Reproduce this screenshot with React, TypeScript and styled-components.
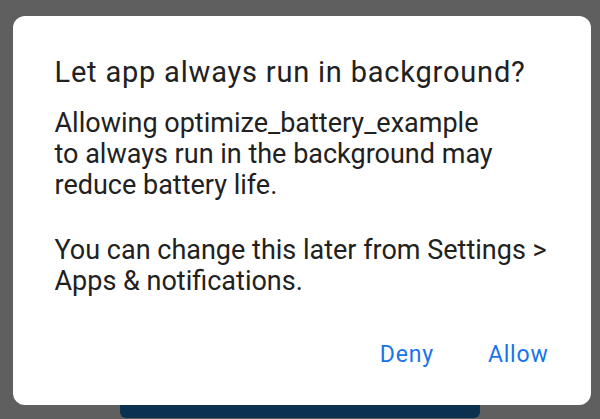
import styled, { createGlobalStyle } from "styled-components";

const GlobalStyle = createGlobalStyle`
  html, body {
    margin: 0;
    padding: 0;
    background: #5f5f5f;
    overflow: hidden;
  }
  body {
    font-family: Roboto, "Noto Sans", "Liberation Sans", sans-serif;
  }
`;

const Screen = styled.div`
  width: 600px;
  height: 419px;
  display: flex;
  flex-direction: column;
  align-items: center;
  padding-top: 16px;
  box-sizing: border-box;
`;

const Dialog = styled.div`
  width: 578px;
  height: 389px;
  margin-left: 3px;
  background: #ffffff;
  border-radius: 12px;
  box-sizing: border-box;
  padding: 40px 42px 0 42px;
  display: flex;
  flex-direction: column;
`;

const Title = styled.h2`
  margin: 0;
  font-size: 29px;
  line-height: 32px;
  font-weight: 400;
  letter-spacing: 0.8px;
  color: #212121;
  white-space: nowrap;
`;

const Message = styled.p<{ $gap: number }>`
  margin: 0;
  font-size: 27px;
  line-height: 31px;
  color: #212121;
  white-space: nowrap;
  padding-top: ${(props) => props.$gap}px;
`;

const Actions = styled.div`
  display: flex;
  justify-content: flex-end;
  gap: 54px;
  margin-top: auto;
  margin-bottom: 36px;
`;

const ActionButton = styled.button`
  border: none;
  background: none;
  padding: 0;
  font-family: inherit;
  font-size: 23px;
  font-weight: 400;
  letter-spacing: 0.8px;
  line-height: 28px;
  color: #1a73e8;
  cursor: pointer;
`;

const HiddenButton = styled.div`
  width: 360px;
  height: 13px;
  background: #0b3150;
  border-radius: 0 0 6px 6px;
`;

function App() {
  return (
    <>
      <GlobalStyle />
      <Screen>
        <Dialog>
          <Title>Let app always run in background?</Title>
          <Message $gap={20}>
            Allowing optimize_battery_example
            <br />
            to always run in the background may
            <br />
            reduce battery life.
          </Message>
          <Message $gap={34}>
            You can change this later from Settings &gt;
            <br />
            Apps &amp; notifications.
          </Message>
          <Actions>
            <ActionButton>Deny</ActionButton>
            <ActionButton>Allow</ActionButton>
          </Actions>
        </Dialog>
        <HiddenButton />
      </Screen>
    </>
  );
}

export default App;
